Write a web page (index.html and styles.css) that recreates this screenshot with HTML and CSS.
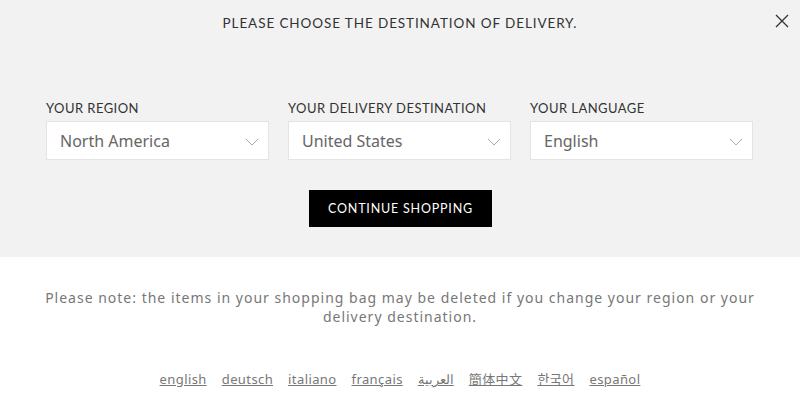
FILE: index.html
```html
<!DOCTYPE html>
<html>
<head>
<meta charset="utf-8">
<link rel="stylesheet" href="styles.css">
</head>
<body>
<div class="top">
  <div class="title">PLEASE CHOOSE THE DESTINATION OF DELIVERY.</div>
  <button class="close" aria-label="close">
    <svg width="14" height="14" viewBox="0 0 14 14"><path d="M1 1L13 13M13 1L1 13" stroke="#333" stroke-width="1.3" fill="none"/></svg>
  </button>
  <div class="fields">
    <div class="field">
      <div class="label">YOUR REGION</div>
      <div class="select"><span>North America</span><svg class="chev" width="14" height="8" viewBox="0 0 14 8"><path d="M1 1L7 7L13 1" stroke="#aaa" stroke-width="1" fill="none"/></svg></div>
    </div>
    <div class="field">
      <div class="label">YOUR DELIVERY DESTINATION</div>
      <div class="select"><span>United States</span><svg class="chev" width="14" height="8" viewBox="0 0 14 8"><path d="M1 1L7 7L13 1" stroke="#aaa" stroke-width="1" fill="none"/></svg></div>
    </div>
    <div class="field">
      <div class="label">YOUR LANGUAGE</div>
      <div class="select"><span>English</span><svg class="chev" width="14" height="8" viewBox="0 0 14 8"><path d="M1 1L7 7L13 1" stroke="#aaa" stroke-width="1" fill="none"/></svg></div>
    </div>
  </div>
  <div class="btnrow"><button class="continue">CONTINUE SHOPPING</button></div>
</div>
<div class="bottom">
  <p class="note">Please note: the items in your shopping bag may be deleted if you change your region or your delivery destination.</p>
  <div class="langs">
    <a href="#">english</a>
    <a href="#">deutsch</a>
    <a href="#">italiano</a>
    <a href="#">français</a>
    <a href="#">العربية</a>
    <a href="#">簡体中文</a>
    <a href="#">한국어</a>
    <a href="#">español</a>
  </div>
</div>
</body>
</html>
```
FILE: styles.css
```css
* { box-sizing: border-box; }
html, body { margin: 0; padding: 0; }
body {
  width: 800px;
  height: 417px;
  overflow: hidden;
  background: #fff;
  font-family: "Open Sans", "Noto Sans", sans-serif;
}
.top {
  position: relative;
  background: #f2f2f2;
  height: 257px;
  padding-top: 14px;
}
.title {
  text-align: center;
  font-family: "Lato", sans-serif;
  font-size: 13.5px;
  letter-spacing: 0.9px;
  color: #333;
  line-height: 18px;
}
.close {
  position: absolute;
  top: 14px;
  right: 11px;
  border: 0;
  background: none;
  padding: 0;
  width: 14px;
  height: 14px;
  display: block;
}
.close svg { display: block; }
.fields {
  display: flex;
  gap: 19px;
  width: 707px;
  margin: 68px auto 0 46px;
}
.field { width: 223px; }
.label {
  font-family: "Lato", sans-serif;
  font-size: 13px;
  letter-spacing: 0.45px;
  color: #333;
  line-height: 16px;
  margin-bottom: 5px;
}
.select {
  height: 39px;
  background: #fff;
  border: 1px solid #e4e4e4;
  display: flex;
  align-items: center;
  justify-content: space-between;
  padding: 1px 9px 0 13px;
  font-family: "Noto Sans", sans-serif;
  font-size: 16px;
  color: #666;
}
.chev { display: block; margin-top: 2px; }
.btnrow {
  display: flex;
  justify-content: center;
  margin-top: 30px;
}
.continue {
  background: #000;
  color: #fff;
  border: 0;
  width: 183px;
  height: 37px;
  font-family: "Lato", sans-serif;
  font-size: 12.5px;
  letter-spacing: 0.8px;
  padding: 0;
  margin-left: 1px;
}
.bottom {
  text-align: center;
}
.note {
  margin: 31px 40px 0;
  font-family: "Noto Sans", sans-serif;
  font-size: 14px;
  letter-spacing: 1px;
  line-height: 19px;
  color: #777;
}
.langs {
  margin-top: 44px;
  display: flex;
  justify-content: center;
  gap: 15px;
  font-family: "Noto Sans", "Noto Sans CJK SC", sans-serif;
  font-size: 13px;
  line-height: 18px;
}
.langs a {
  color: #777;
  text-decoration: underline;
  letter-spacing: 0.4px;
}
```
